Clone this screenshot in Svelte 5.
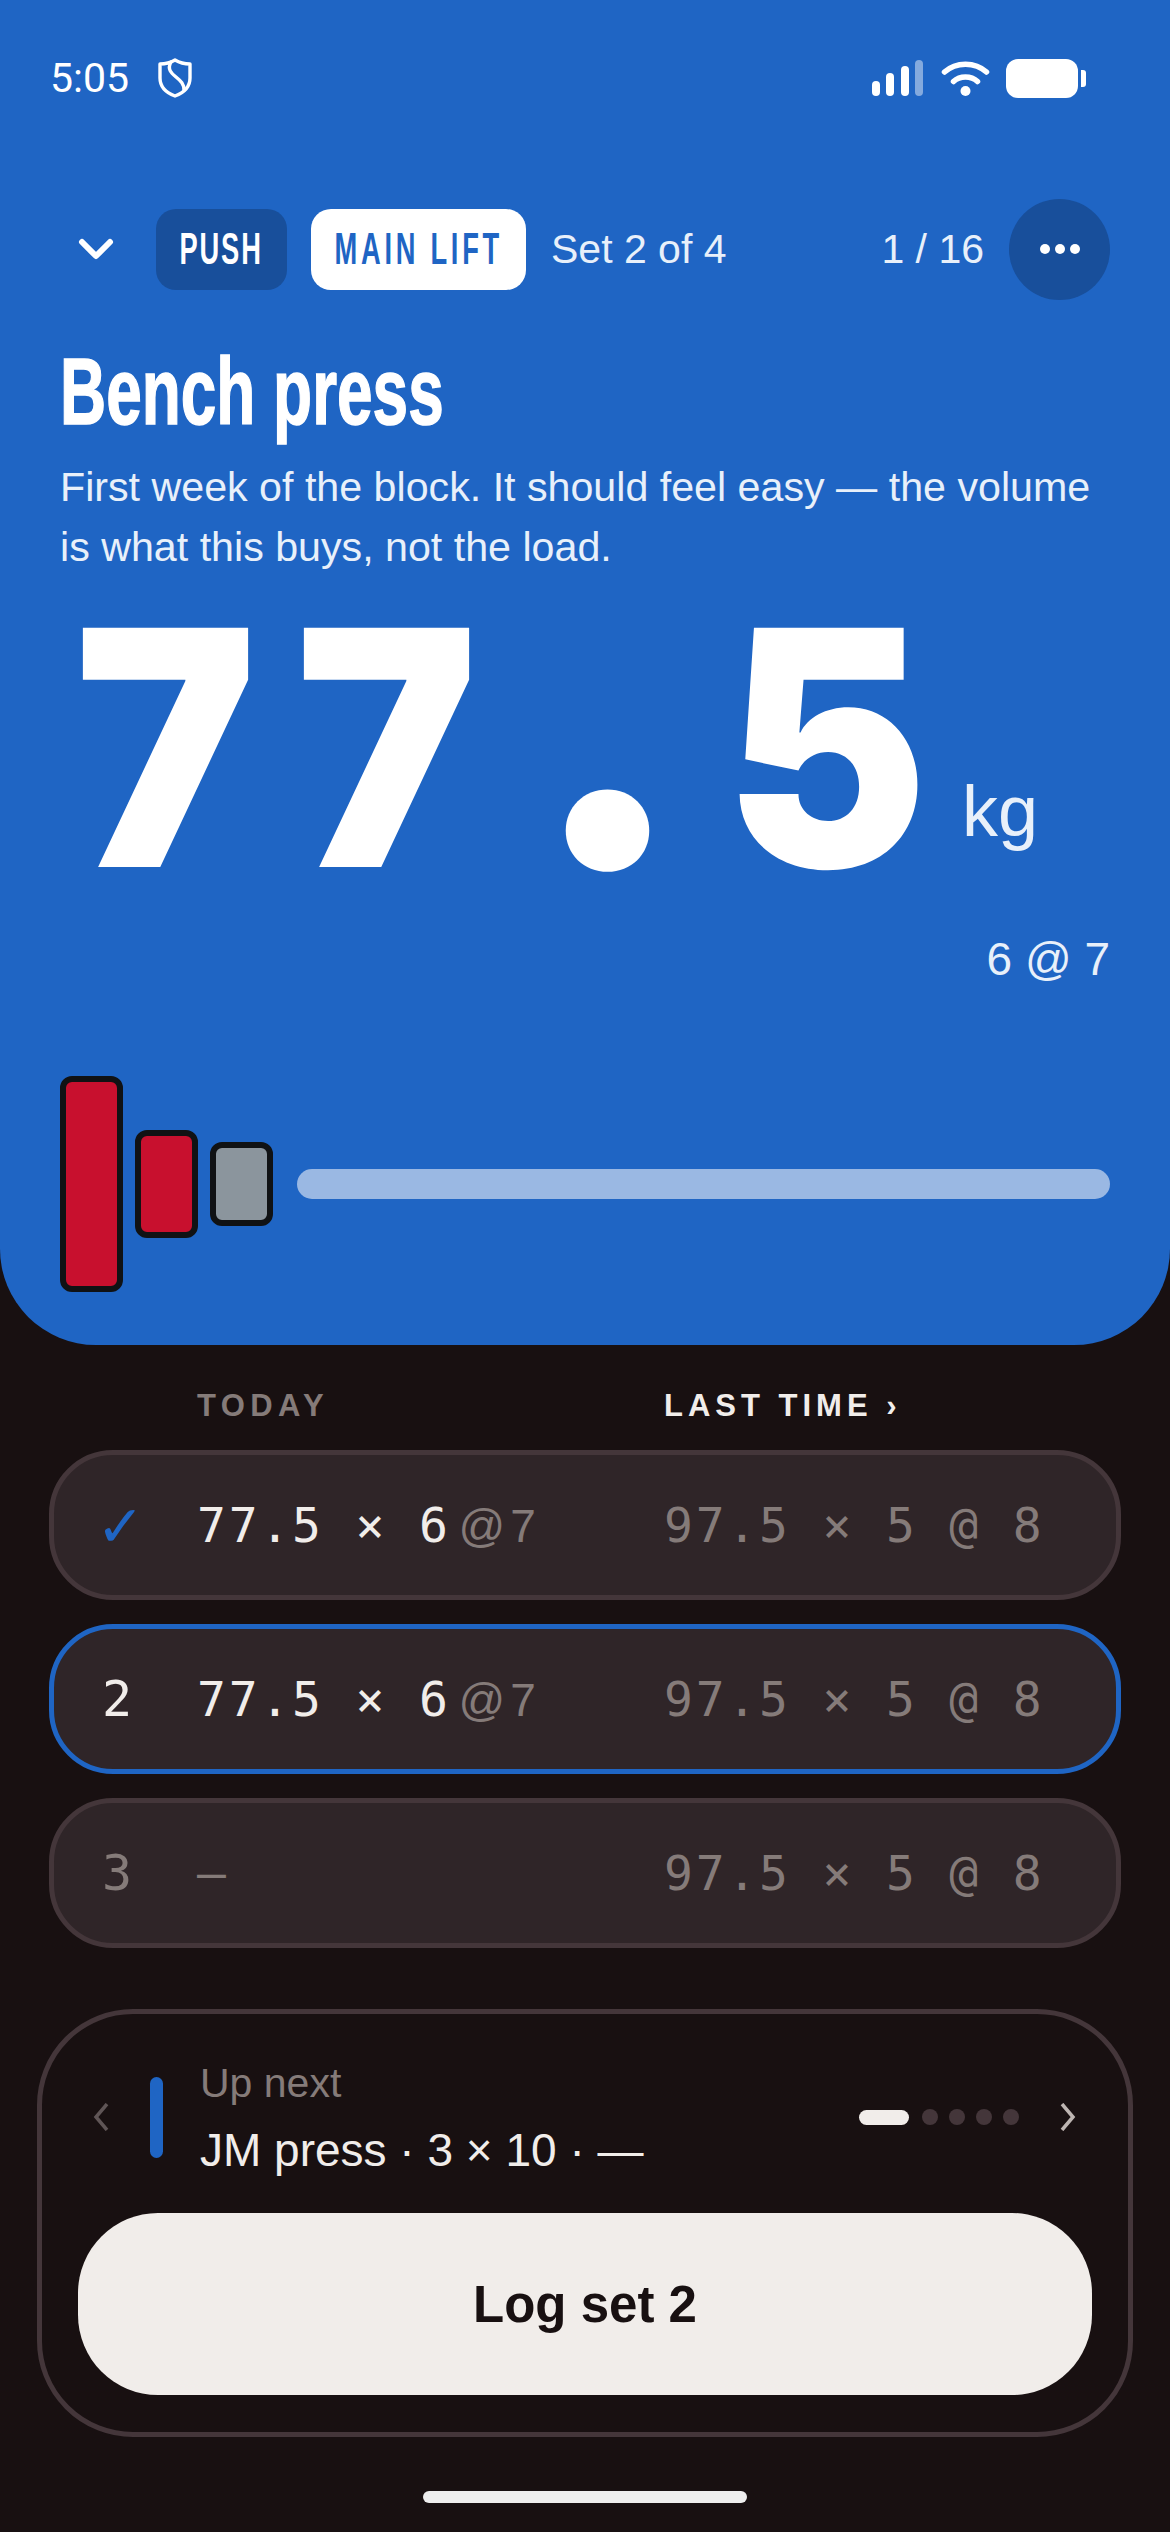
<script>
	const sets = [
		{ mark: '✓', state: 'done', weight: '77.5 × 6', rpe: '@7' },
		{ mark: '2', state: 'current', weight: '77.5 × 6', rpe: '@7' },
		{ mark: '3', state: 'todo', weight: '–', rpe: '' }
	];
	const chars = ['7', '7', '.', '5'];
</script>

<div class="screen">
	<section class="hero">
		<div class="status">
			<span class="time">5:05</span>
			<svg class="shield" viewBox="0 0 34 40" fill="none" stroke="#fff" stroke-width="3.4" stroke-linejoin="round" stroke-linecap="round">
				<path d="M17 2C22 5 27 6 32 6V20C32 29 25 35 17 38C9 35 2 29 2 20V6C7 6 12 5 17 2Z" />
				<path d="M13 4C9 11 13 15 18 19C23 23 26 26 26 32" />
			</svg>
			<span class="grow"></span>
			<svg class="signal" viewBox="0 0 51 36" fill="#fff">
				<rect x="0" y="21" width="8" height="15" rx="4" />
				<rect x="14" y="13" width="8" height="23" rx="4" />
				<rect x="29" y="6" width="8" height="30" rx="4" />
				<rect x="43" y="0" width="8" height="36" rx="4" opacity="0.45" />
			</svg>
			<svg class="wifi" viewBox="0 0 49 36" fill="none" stroke="#fff" stroke-width="5.5" stroke-linecap="round">
				<path d="M3.500 12C15 1.500 34 1.500 45.500 12" />
				<path d="M12.500 21.500C19 15.500 30 15.500 36.500 21.500" />
				<circle cx="24.500" cy="31" r="5" fill="#fff" stroke="none" />
			</svg>
			<div class="battery"><span class="cell"></span><span class="nub"></span></div>
		</div>

		<div class="topbar">
			<span class="back">
				<svg viewBox="0 0 36 24" width="36" height="24" fill="none" stroke="#fff" stroke-width="6" stroke-linecap="round" stroke-linejoin="round">
					<path d="M4 5L18 19L32 5" />
				</svg>
			</span>
			<span class="chip chip-dark"><span>PUSH</span></span>
			<span class="chip chip-light"><span>MAIN LIFT</span></span>
			<span class="setinfo">Set 2 of 4</span>
			<span class="grow"></span>
			<span class="count">1 / 16</span>
			<span class="more"><i></i><i></i><i></i></span>
		</div>

		<h1>Bench press</h1>
		<p class="note">First week of the block. It should feel easy — the volume is what this buys, not the load.</p>

		<div class="load">
			<div class="num">
				{#each chars as c}
					<span class="ch" class:pt={c === '.'}>{c}</span>
				{/each}
			</div>
			<span class="unit">kg</span>
		</div>
		<div class="target">6 @ 7</div>

		<div class="bar">
			<span class="plate red big"></span>
			<span class="plate red mid"></span>
			<span class="plate grey small"></span>
			<span class="sleeve"></span>
		</div>
	</section>

	<div class="heads">
		<span class="h-today">TODAY</span>
		<span class="h-last">LAST TIME <b>›</b></span>
	</div>

	<div class="rows">
		{#each sets as s}
			<div class="row {s.state}">
				<span class="mark">{s.mark}</span>
				<span class="today">{s.weight}{#if s.rpe}<em>{s.rpe}</em>{/if}</span>
				<span class="last">97.5 × 5 @ 8</span>
			</div>
		{/each}
	</div>

	<div class="dock">
		<div class="next">
			<svg class="arrow" viewBox="0 0 18 28" fill="none" stroke="#5f5556" stroke-width="3.5"><path d="M15 1L4 14L15 27" /></svg>
			<span class="tick"></span>
			<div class="next-text">
				<div class="next-label">Up next</div>
				<div class="next-name">JM press · 3 × 10 · —</div>
			</div>
			<span class="grow"></span>
			<div class="pager">
				<span class="pill"></span><span class="dot"></span><span class="dot"></span><span class="dot"></span><span class="dot"></span>
			</div>
			<svg class="arrow" viewBox="0 0 18 28" fill="none" stroke="#bdb5b2" stroke-width="3.5"><path d="M3 1L14 14L3 27" /></svg>
		</div>
		<button class="log">Log set 2</button>
	</div>

	<div class="home"></div>
</div>

<style>
	:global(body) {
		margin: 0;
		background: #181011;
	}

	.screen {
		width: 1170px;
		height: 2532px;
		background: #181011;
		font-family: 'Liberation Sans', Arial, sans-serif;
		color: #f1edea;
		overflow: hidden;
	}

	.grow {
		flex: 1;
	}

	.hero {
		box-sizing: border-box;
		height: 1345px;
		padding: 56px 60px 0;
		background: #1f65c4;
		border-radius: 0 0 96px 96px;
		color: #fff;
	}

	.status {
		display: flex;
		align-items: center;
		height: 44px;
		margin: 0 24px 0 -10px;
	}

	.time {
		font-family: Roboto, sans-serif;
		font-size: 41px;
		line-height: 44px;
	}

	.shield {
		width: 34px;
		height: 40px;
		margin-left: 29px;
	}

	.signal {
		width: 51px;
		height: 36px;
	}

	.wifi {
		width: 49px;
		height: 36px;
		margin-left: 18px;
	}

	.battery {
		display: flex;
		align-items: center;
		gap: 3px;
		margin-left: 16px;
	}

	.cell {
		width: 72px;
		height: 39px;
		border-radius: 12px;
		background: #fff;
	}

	.nub {
		width: 5px;
		height: 17px;
		border-radius: 0 3px 3px 0;
		background: #fff;
	}

	.topbar {
		display: flex;
		align-items: center;
		height: 102px;
		margin-top: 98px;
	}

	.back {
		display: flex;
		justify-content: center;
		width: 72px;
		margin-right: 24px;
	}

	.chip {
		display: flex;
		align-items: center;
		justify-content: center;
		height: 81px;
		border-radius: 20px;
		font-weight: 700;
		font-size: 44px;
	}

	.chip span {
		display: inline-block;
		transform: scaleX(0.62);
		white-space: nowrap;
	}

	.chip-dark {
		width: 131px;
		background: #184f9b;
		color: #fff;
		margin-right: 24px;
		letter-spacing: 3px;
	}

	.chip-light {
		width: 215px;
		background: #fff;
		color: #1f65c4;
		margin-right: 25px;
		letter-spacing: 6px;
	}

	.setinfo,
	.count {
		font-size: 41px;
		color: #e8f0fa;
	}

	.count {
		margin-right: 25px;
	}

	.more {
		display: flex;
		align-items: center;
		justify-content: center;
		gap: 5px;
		width: 101px;
		height: 101px;
		border-radius: 50%;
		background: #184f9b;
	}

	.more i {
		width: 10px;
		height: 10px;
		border-radius: 50%;
		background: #fff;
	}

	h1 {
		margin: 42px 0 0;
		font-size: 94px;
		line-height: 100px;
		font-weight: 700;
		transform: scaleX(0.68);
		transform-origin: left center;
		white-space: nowrap;
		-webkit-text-stroke: 1.5px #fff;
	}

	.note {
		margin: 15px 0 0;
		font-size: 41.2px;
		line-height: 60px;
		color: #e8f0fa;
	}

	.load {
		display: flex;
		align-items: baseline;
		height: 325px;
		padding-top: 5px;
		margin-left: -5px;
	}

	.num {
		display: flex;
		align-items: baseline;
		font-family: Inter, sans-serif;
		font-weight: 900;
		font-size: 329px;
		line-height: 330px;
		font-variant-numeric: tabular-nums;
	}

	.ch {
		display: inline-block;
		width: 221px;
		text-align: center;
		transform: scaleX(0.93);
	}

	.ch.pt {
		font-size: 415px;
		line-height: 267px;
		transform: none;
	}

	.unit {
		align-self: flex-end;
		margin: 0 0 56px 23px;
		font-size: 72px;
		line-height: 80px;
		color: #e8f0fa;
	}

	.target {
		margin-top: 22px;
		text-align: right;
		font-size: 46px;
		line-height: 60px;
		color: #e8f0fa;
	}

	.bar {
		display: flex;
		align-items: center;
		gap: 12px;
		height: 216px;
		margin-top: 87px;
	}

	.plate {
		box-sizing: border-box;
		flex: none;
		width: 63px;
		border: 6px solid #101214;
		border-radius: 12px;
	}

	.red {
		background: #c8102e;
	}

	.grey {
		background: #8b959d;
	}

	.big {
		height: 216px;
	}

	.mid {
		height: 108px;
	}

	.small {
		height: 84px;
	}

	.sleeve {
		flex: 1;
		height: 30px;
		margin-left: 12px;
		border-radius: 15px;
		background: #9ab8e3;
	}

	.heads {
		display: grid;
		grid-template-columns: 467px 1fr;
		padding: 43px 0 0 197px;
		height: 62px;
		box-sizing: border-box;
		font-size: 31px;
		line-height: 36px;
	}

	.h-today {
		color: #857b79;
		font-weight: 700;
		letter-spacing: 5.4px;
	}

	.h-last {
		color: #f1edea;
		font-weight: 700;
		letter-spacing: 5px;
	}

	.rows {
		display: flex;
		flex-direction: column;
		gap: 24px;
		margin: 43px 49px 0;
	}

	.row {
		box-sizing: border-box;
		display: grid;
		grid-template-columns: 95px 467px 1fr;
		align-items: center;
		height: 150px;
		padding-left: 48px;
		border: 5px solid #44363a;
		border-radius: 64px;
		background: #2f2528;
		font-family: 'DejaVu Sans Mono', monospace;
		font-size: 48px;
		letter-spacing: 2.8px;
		white-space: pre;
	}

	.row.current {
		border-color: #1f65c4;
	}

	.mark {
		font-size: 50px;
	}

	.done .mark {
		color: #1f65c4;
		font-size: 66px;
		line-height: 60px;
		margin-left: -2px;
	}

	.todo .mark,
	.todo .today {
		color: #857b79;
	}

	.today em {
		margin-left: 8px;
		font-style: normal;
		font-family: 'Liberation Sans', sans-serif;
		font-size: 46px;
		letter-spacing: 5px;
		color: #857b79;
	}

	.last {
		color: #857b79;
	}

	.dock {
		box-sizing: border-box;
		height: 428px;
		margin: 61px 37px 0;
		padding: 36px;
		border: 5px solid #44363a;
		border-radius: 96px;
	}

	.next {
		display: flex;
		align-items: center;
		height: 134px;
		margin-bottom: 29px;
		padding: 0 15px 0 14px;
	}

	.arrow {
		flex: none;
		width: 18px;
		height: 28px;
	}

	.tick {
		width: 13px;
		height: 81px;
		margin: 0 37px 0 40px;
		border-radius: 7px;
		background: #1f65c4;
	}

	.next-label {
		font-size: 41px;
		line-height: 66px;
		color: #857b79;
	}

	.next-name {
		font-size: 46px;
		line-height: 68px;
	}

	.pager {
		display: flex;
		align-items: center;
		gap: 11px;
		margin-right: 40px;
	}

	.pill {
		width: 50px;
		height: 15px;
		border-radius: 8px;
		background: #f1edea;
		margin-right: 2px;
	}

	.dot {
		width: 16px;
		height: 16px;
		border-radius: 50%;
		background: #44363a;
	}

	.log {
		display: block;
		width: 100%;
		height: 182px;
		border: 0;
		border-radius: 80px;
		background: #f1edea;
		color: #181011;
		font-family: inherit;
		font-size: 51px;
		font-weight: 700;
	}

	.home {
		width: 324px;
		height: 12px;
		margin: 54px auto 0;
		border-radius: 6px;
		background: #eeeeee;
	}
</style>
